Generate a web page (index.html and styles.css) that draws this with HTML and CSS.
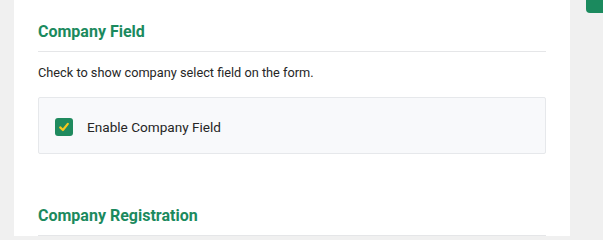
FILE: index.html
```html
<!DOCTYPE html>
<html>
<head>
<meta charset="utf-8">
<link rel="stylesheet" href="styles.css">
</head>
<body>
<div class="layout">
  <div class="gutter"></div>
  <main class="panel">
    <section class="section">
      <h2 class="section-title">Company Field</h2>
      <p class="section-desc">Check to show company select field on the form.</p>
      <div class="option-box">
        <label class="option">
          <span class="checkbox">
            <svg viewBox="0 0 18 18" width="18" height="18"><path d="M5.2 9.4 L7.9 12 L12.8 5.9" fill="none" stroke="#f7c81e" stroke-width="2.2" stroke-linecap="round" stroke-linejoin="round"/></svg>
          </span>
          <span class="option-label">Enable Company Field</span>
        </label>
      </div>
    </section>
    <section class="section section-next">
      <h2 class="section-title">Company Registration</h2>
    </section>
  </main>
  <aside class="side">
    <div class="side-tab"></div>
  </aside>
</div>
</body>
</html>
```
FILE: styles.css
```css
html, body {
  margin: 0;
  padding: 0;
  height: 100%;
  background: #f0f0f0;
  font-family: Roboto, "Open Sans", sans-serif;
  color: #262626;
}
.layout {
  display: flex;
  height: 236px;
  overflow: hidden;
}
.gutter {
  width: 14px;
  flex: none;
}
.panel {
  width: 508px;
  flex: none;
  background: #ffffff;
  padding: 0 24px;
}
.side {
  flex: 1;
  display: flex;
  justify-content: flex-end;
}
.side-tab {
  width: 17px;
  height: 13px;
  background: #1b8a5e;
  border-bottom-left-radius: 4px;
}
.section-title {
  margin: 0;
  padding-top: 21px;
  padding-bottom: 9px;
  font-size: 16px;
  line-height: 21px;
  font-weight: 700;
  color: #1b8a5e;
  border-bottom: 1px solid #e5e6e8;
}
.section-desc {
  margin: 11px 0 0;
  font-size: 12.75px;
  line-height: 20px;
  color: #262626;
}
.option-box {
  margin-top: 14px;
  height: 55px;
  box-sizing: content-box;
  background: #f8f9fb;
  border: 1px solid #e6e8eb;
  border-radius: 2px;
  display: flex;
  align-items: center;
  padding: 3px 16px 0;
  height: 52px;
}
.option {
  display: flex;
  align-items: center;
  gap: 14px;
}
.checkbox {
  width: 18px;
  height: 18px;
  border-radius: 3px;
  background: #1f8a5e;
  display: flex;
}
.option-label {
  font-size: 13.6px;
  line-height: 18px;
  color: #262626;
}
.section-next {
  margin-top: 30px;
}
```
